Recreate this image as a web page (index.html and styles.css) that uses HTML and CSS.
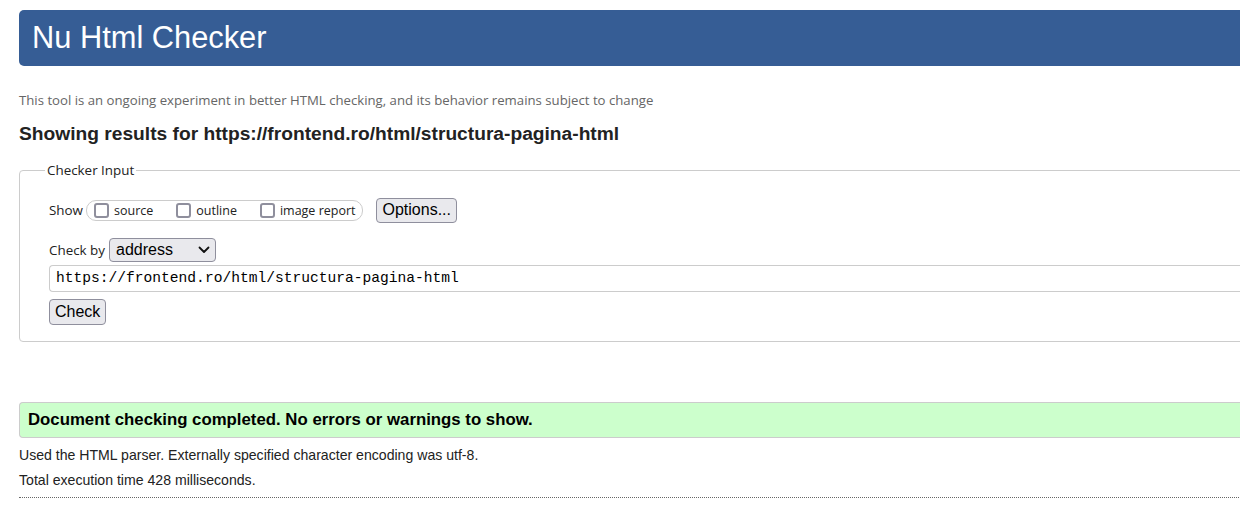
FILE: index.html
```html
<!DOCTYPE html>
<html lang="en">
<head>
<meta charset="utf-8">
<title>Nu Html Checker</title>
<link rel="stylesheet" href="styles.css">
</head>
<body>
<div class="page">
  <h1 class="banner">Nu Html Checker</h1>
  <p class="tagline">This tool is an ongoing experiment in better HTML checking, and its behavior remains subject to change</p>
  <h2 class="results-title">Showing results for https://frontend.ro/html/structura-pagina-html</h2>
  <fieldset class="checker">
    <legend class="checker-legend">Checker Input</legend>
    <div class="row show-row">
      <span class="label">Show</span>
      <span class="show-group">
        <label class="opt"><span class="box"></span>source</label>
        <label class="opt"><span class="box"></span>outline</label>
        <label class="opt"><span class="box"></span>image report</label>
      </span>
      <span class="btn options-btn">Options...</span>
    </div>
    <div class="row by-row">
      <span class="label">Check by</span>
      <span class="select">address
        <svg class="chev" width="12" height="8" viewBox="0 0 12 8"><path d="M1.5 1.5 L6 6 L10.5 1.5" fill="none" stroke="#111" stroke-width="1.8" stroke-linecap="round" stroke-linejoin="round"/></svg>
      </span>
    </div>
    <div class="url-input">https://frontend.ro/html/structura-pagina-html</div>
    <div class="row"><span class="btn check-btn">Check</span></div>
  </fieldset>
  <div class="success">Document checking completed. No errors or warnings to show.</div>
  <p class="details">Used the HTML parser. Externally specified character encoding was utf-8.</p>
  <p class="details">Total execution time 428 milliseconds.</p>
  <hr class="dots">
</div>
</body>
</html>
```
FILE: styles.css
```css
html { overflow: hidden; }
body {
  margin: 0;
  background: #fff;
  font-family: "Liberation Sans", Arial, sans-serif;
  color: #222;
}
.page {
  padding: 10px 0 0 19px;
  width: 1300px;
}
.banner {
  margin: 0;
  height: 56px;
  box-sizing: border-box;
  background: #365d95;
  color: #fff;
  font-weight: normal;
  font-size: 30.8px;
  line-height: 56px;
  padding-left: 13px;
  border-radius: 5px 0 0 5px;
}
.tagline {
  margin: 25px 0 0 0;
  font-family: "Open Sans", "Noto Sans", sans-serif;
  font-size: 13.2px;
  color: #666;
  line-height: 18px;
}
.results-title {
  margin: 14px 0 0 0;
  font-size: 19.2px;
  font-weight: bold;
  color: #222;
  line-height: 22px;
}
.checker {
  margin: 16px 0 0 0;
  border: 1px solid #ccc;
  border-radius: 4px 0 0 4px;
  padding: 18px 0 16px 29px;
  min-width: 0;
}
.checker-legend {
  font-family: "Open Sans", "Noto Sans", sans-serif;
  font-size: 13.4px;
  color: #222;
  padding: 0 2px;
  margin-left: -4px;
}
.row {
  display: flex;
  align-items: center;
}
.label {
  font-family: "Open Sans", "Noto Sans", sans-serif;
  font-size: 13.4px;
  color: #222;
}
.show-row { height: 26px; }
.show-group {
  display: flex;
  align-items: center;
  height: 21px;
  box-sizing: border-box;
  margin-left: 3px;
  padding: 0 6px 0 7px;
  border: 1px solid #ccc;
  border-radius: 10px;
}
.opt {
  display: flex;
  align-items: center;
  font-family: "Open Sans", "Noto Sans", sans-serif;
  font-size: 12.5px;
  color: #222;
  margin-right: 23px;
}
.opt:last-child { margin-right: 0; }
.box {
  width: 15px;
  height: 15px;
  box-sizing: border-box;
  border: 2px solid #8f8f9d;
  border-radius: 3px;
  margin-right: 5px;
  background: #fff;
}
.btn {
  display: inline-flex;
  align-items: center;
  box-sizing: border-box;
  background: #e9e9ed;
  border: 1px solid #8f8f9d;
  border-radius: 4px;
  color: #000;
  font-family: "Liberation Sans", Arial, sans-serif;
  font-size: 16px;
}
.options-btn {
  height: 25px;
  margin-left: 13px;
  padding: 0 5px 0 6px;
}
.by-row {
  margin-top: 15px;
  height: 24px;
}
.select {
  display: inline-flex;
  align-items: center;
  justify-content: space-between;
  box-sizing: border-box;
  width: 107px;
  height: 24px;
  margin-left: 4px;
  padding: 0 5px 0 6px;
  background: #e9e9ed;
  border: 1px solid #8f8f9d;
  border-radius: 4px;
  font-size: 16px;
  color: #000;
}
.url-input {
  margin-top: 3px;
  height: 27px;
  box-sizing: border-box;
  border: 1px solid #ccc;
  border-right: 0;
  border-radius: 4px 0 0 4px;
  padding-left: 6px;
  font-family: "Liberation Mono", "DejaVu Sans Mono", monospace;
  font-size: 14.6px;
  line-height: 25px;
  color: #000;
}
.check-btn {
  margin-top: 7px;
  height: 26px;
  padding: 0 5px 0 5px;
}
.success {
  margin-top: 60px;
  height: 36px;
  box-sizing: border-box;
  background: #ccffcc;
  border: 1px solid #ccc;
  border-right: 0;
  border-radius: 4px 0 0 4px;
  padding-left: 8px;
  font-size: 16.8px;
  font-weight: bold;
  color: #000;
  line-height: 34px;
}
.details {
  margin: 9px 0 0 0;
  font-size: 14.1px;
  color: #222;
  line-height: 16px;
}
.details + .details { margin-top: 9px; }
.dots {
  margin: 9px 0 0 0;
  border: 0;
  border-top: 1px dotted #666;
  height: 0;
}
```
